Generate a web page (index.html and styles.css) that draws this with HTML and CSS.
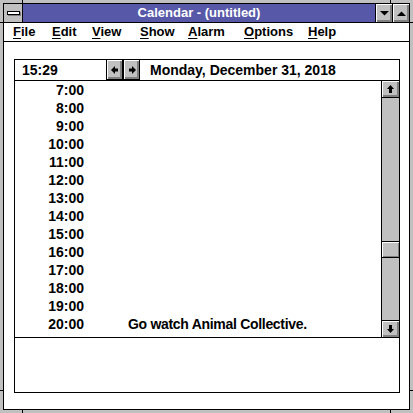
FILE: index.html
```html
<!DOCTYPE html>
<html>
<head>
<meta charset="utf-8">
<link rel="stylesheet" href="styles.css">
</head>
<body>
<div class="window">
  <span class="notch n-tl-v"></span><span class="notch n-tl-h"></span>
  <span class="notch n-tr-v"></span><span class="notch n-tr-h"></span>
  <span class="notch n-bl-v"></span><span class="notch n-bl-h"></span>
  <span class="notch n-br-v"></span><span class="notch n-br-h"></span>
  <div class="inner">
    <div class="titlebar">
      <div class="sysmenu"><span class="dash"></span></div>
      <div class="title">Calendar - (untitled)</div>
      <div class="tbtn"><svg width="9" height="5" viewBox="0 0 9 5"><polygon points="0,0 9,0 4.5,4.5" fill="#000"/></svg></div>
      <div class="tbtn"><svg width="9" height="5" viewBox="0 0 9 5"><polygon points="0,5 9,5 4.5,0.5" fill="#000"/></svg></div>
    </div>
    <div class="menubar">
      <span class="mi m-file"><u>F</u>ile</span>
      <span class="mi m-edit"><u>E</u>dit</span>
      <span class="mi m-view"><u>V</u>iew</span>
      <span class="mi m-show"><u>S</u>how</span>
      <span class="mi m-alarm"><u>A</u>larm</span>
      <span class="mi m-options"><u>O</u>ptions</span>
      <span class="mi m-help"><u>H</u>elp</span>
    </div>
    <div class="client">
      <div class="box">
        <div class="header">
          <div class="clock">15:29</div>
          <div class="navbtn"><svg width="8" height="8" viewBox="0 0 8 8"><polygon points="0,4 4,0 4,8" fill="#000"/><rect x="4" y="2.5" width="3" height="3" fill="#000"/></svg></div>
          <div class="navbtn"><svg width="8" height="8" viewBox="0 0 8 8"><polygon points="8,4 4,0 4,8" fill="#000"/><rect x="1" y="2.5" width="3" height="3" fill="#000"/></svg></div>
          <div class="date">Monday, December 31, 2018</div>
        </div>
        <div class="list">
          <div class="rows">
            <div class="row"><span class="hour">7:00</span><span class="appt"></span></div>
            <div class="row"><span class="hour">8:00</span><span class="appt"></span></div>
            <div class="row"><span class="hour">9:00</span><span class="appt"></span></div>
            <div class="row"><span class="hour">10:00</span><span class="appt"></span></div>
            <div class="row"><span class="hour">11:00</span><span class="appt"></span></div>
            <div class="row"><span class="hour">12:00</span><span class="appt"></span></div>
            <div class="row"><span class="hour">13:00</span><span class="appt"></span></div>
            <div class="row"><span class="hour">14:00</span><span class="appt"></span></div>
            <div class="row"><span class="hour">15:00</span><span class="appt"></span></div>
            <div class="row"><span class="hour">16:00</span><span class="appt"></span></div>
            <div class="row"><span class="hour">17:00</span><span class="appt"></span></div>
            <div class="row"><span class="hour">18:00</span><span class="appt"></span></div>
            <div class="row"><span class="hour">19:00</span><span class="appt"></span></div>
            <div class="row"><span class="hour">20:00</span><span class="appt">Go watch Animal Collective.</span></div>
          </div>
          <div class="scrollbar">
            <div class="sbtn up"><svg width="7" height="8" viewBox="0 0 7 8"><polygon points="3.5,0 0,4 7,4" fill="#000"/><rect x="2" y="4" width="3" height="4" fill="#000"/></svg></div>
            <div class="track">
              <div class="thumb"></div>
            </div>
            <div class="sbtn down"><svg width="7" height="8" viewBox="0 0 7 8"><polygon points="3.5,8 0,4 7,4" fill="#000"/><rect x="2" y="0" width="3" height="4" fill="#000"/></svg></div>
          </div>
        </div>
        <div class="notes"></div>
      </div>
    </div>
  </div>
</div>
</body>
</html>
```

FILE: styles.css
```css
html, body {
  margin: 0;
  padding: 0;
  background: #c0c0c0;
}
body {
  width: 413px;
  height: 413px;
  overflow: hidden;
  font-family: "Liberation Sans", Arial, sans-serif;
  font-weight: bold;
  font-size: 13px;
  color: #000;
}
.window {
  position: relative;
  width: 413px;
  height: 413px;
  box-sizing: border-box;
  padding: 3px;
  background: #c0c0c0;
}
.notch {
  position: absolute;
  background: #000;
}
.n-tl-v { left: 22px; top: 0; width: 1px; height: 3px; }
.n-tl-h { left: 0; top: 22px; width: 3px; height: 1px; }
.n-tr-v { left: 390px; top: 0; width: 1px; height: 3px; }
.n-tr-h { right: 0; top: 22px; width: 3px; height: 1px; }
.n-bl-v { left: 22px; bottom: 0; width: 1px; height: 3px; }
.n-bl-h { left: 0; bottom: 22px; width: 3px; height: 1px; }
.n-br-v { left: 390px; bottom: 0; width: 1px; height: 3px; }
.n-br-h { right: 0; bottom: 22px; width: 3px; height: 1px; }

.inner {
  width: 100%;
  height: 100%;
  box-sizing: border-box;
  border: 1px solid #000;
  display: flex;
  flex-direction: column;
  background: #fff;
}
.titlebar {
  height: 18px;
  display: flex;
  border-bottom: 1px solid #000;
  flex: none;
}
.sysmenu {
  width: 18px;
  height: 18px;
  background: #c0c0c0;
  border-right: 1px solid #000;
  display: flex;
  align-items: center;
  justify-content: center;
}
.dash {
  width: 11px;
  height: 2px;
  background: #fff;
  border: 1px solid #000;
  box-shadow: 1px 1px 0 #808080;
}
.title {
  flex: 1;
  background: #5858a8;
  color: #fff;
  text-align: center;
  line-height: 18px;
  font-size: 13px;
}
.tbtn {
  width: 17px;
  height: 18px;
  box-sizing: border-box;
  background: #c0c0c0;
  border-left: 1px solid #000;
  box-shadow: inset 1px 1px 0 #fff, inset -1px -1px 0 #808080, inset -2px -2px 0 #808080;
  display: flex;
  align-items: center;
  justify-content: center;
}
.menubar {
  height: 18px;
  flex: none;
  border-bottom: 1px solid #000;
  position: relative;
  line-height: 18px;
}
.mi { position: absolute; top: 0; }
.mi u { text-underline-offset: 2px; }
.m-file { left: 9px; }
.m-edit { left: 48px; }
.m-view { left: 88px; }
.m-show { left: 136px; }
.m-alarm { left: 184px; }
.m-options { left: 240px; }
.m-help { left: 304px; }

.client {
  flex: 1;
  background: #fff;
  padding: 17px 9px 0 10px;
  font-size: 14px;
}
.box {
  width: 386px;
  height: 334px;
  box-sizing: border-box;
  border: 1px solid #000;
  display: flex;
  flex-direction: column;
}
.header {
  height: 20px;
  flex: none;
  border-bottom: 1px solid #000;
  display: flex;
  align-items: flex-start;
}
.clock {
  width: 91px;
  box-sizing: border-box;
  padding-left: 7px;
  line-height: 20px;
}
.navbtn {
  width: 17px;
  height: 21px;
  margin-top: -1px;
  box-sizing: border-box;
  border: 1px solid #000;
  background: #c0c0c0;
  box-shadow: inset 1px 1px 0 #fff, inset -1px -1px 0 #808080, inset -2px -2px 0 #808080;
  display: flex;
  align-items: center;
  justify-content: center;
}
.date {
  padding-left: 10px;
  line-height: 20px;
}
.list {
  height: 256px;
  flex: none;
  display: flex;
  border-bottom: 1px solid #000;
}
.rows {
  flex: 1;
}
.row {
  height: 18px;
  line-height: 18px;
  display: flex;
}
.hour {
  width: 69px;
  text-align: right;
  flex: none;
}
.appt {
  padding-left: 44px;
  letter-spacing: -0.3px;
}
.scrollbar {
  width: 17px;
  border-left: 1px solid #000;
  display: flex;
  flex-direction: column;
  background: #c0c0c0;
}
.sbtn {
  height: 16px;
  flex: none;
  background: #c0c0c0;
  box-shadow: inset 1px 1px 0 #fff, inset -1px -1px 0 #808080, inset -2px -2px 0 #808080;
  display: flex;
  align-items: center;
  justify-content: center;
}
.sbtn.up { border-bottom: 1px solid #000; }
.sbtn.down { border-top: 1px solid #000; }
.track {
  flex: 1;
  padding-top: 143px;
}
.thumb {
  height: 15px;
  border-top: 1px solid #000;
  border-bottom: 1px solid #000;
  background: #c0c0c0;
  box-shadow: inset 1px 1px 0 #fff, inset -1px -1px 0 #808080;
}
.notes {
  flex: 1;
}
```
